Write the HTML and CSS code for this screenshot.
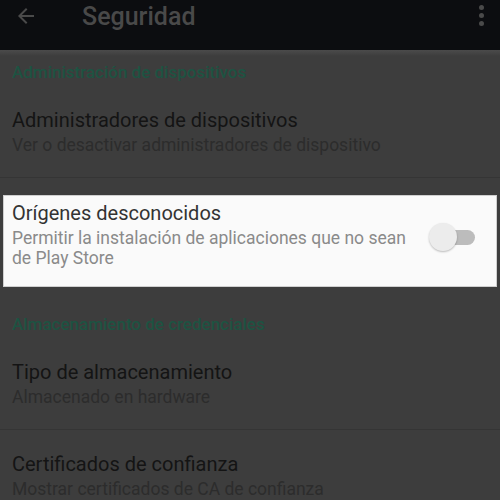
FILE: index.html
```html
<!DOCTYPE html>
<html lang="es">
<head>
  <meta charset="UTF-8" />
  <title>Seguridad</title>
  <link rel="stylesheet" href="styles.css">
</head>
<body>
  <header class="toolbar">
    <svg class="back" width="24" height="24" viewBox="0 0 24 24">
      <path d="M20 11H7.83l5.59-5.59L12 4l-8 8 8 8 1.41-1.41L7.83 13H20v-2z" fill="#4a4a4a"/>
    </svg>
    <h1>Seguridad</h1>
    <div class="more">
      <span></span><span></span><span></span>
    </div>
  </header>

  <main class="list">
    <div class="section">Administración de dispositivos</div>
    <div class="item">
      <div class="title">Administradores de dispositivos</div>
      <div class="summary">Ver o desactivar administradores de dispositivo</div>
    </div>

    <div class="item highlight">
      <div class="text">
        <div class="title">Orígenes desconocidos</div>
        <div class="summary">Permitir la instalación de aplicaciones que no sean de Play Store</div>
      </div>
      <div class="switch">
        <span class="track"></span>
        <span class="thumb"></span>
      </div>
    </div>

    <div class="section">Almacenamiento de credenciales</div>
    <div class="item">
      <div class="title">Tipo de almacenamiento</div>
      <div class="summary">Almacenado en hardware</div>
    </div>
    <div class="item">
      <div class="title">Certificados de confianza</div>
      <div class="summary">Mostrar certificados de CA de confianza</div>
    </div>
  </main>
</body>
</html>
```

FILE: styles.css
```css
body {
  margin: 0;
  font-family: Roboto, "Noto Sans", sans-serif;
  background-color: #3d3d3d;
  width: 500px;
  height: 500px;
  overflow: hidden;
}

.toolbar {
  height: 50px;
  background-color: #0c0d10;
  display: flex;
  align-items: flex-start;
}

.toolbar .back {
  margin: 4px 0 0 14px;
}

.toolbar h1 {
  margin: 0 0 0 44px;
  font-size: 25px;
  font-weight: 500;
  color: #494949;
  line-height: 34px;
}

.more {
  margin: 5px 16px 0 auto;
  display: flex;
  flex-direction: column;
  gap: 3px;
}

.more span {
  width: 5px;
  height: 5px;
  border-radius: 50%;
  background-color: #4a4a4a;
}

.list {
  background: linear-gradient(#4b4b4b, #3d3d3d 6px);
}

.section {
  box-sizing: border-box;
  height: 36px;
  padding: 12px 12px 0;
  font-size: 17px;
  font-weight: 500;
  line-height: 20px;
  color: #1d5342;
}

.item {
  box-sizing: border-box;
  height: 92px;
  padding: 21px 12px 0;
  border-bottom: 1px solid #353535;
}

.item .title {
  font-size: 20px;
  line-height: 26px;
  color: #141414;
}

.item .summary {
  margin-top: 2px;
  font-size: 17.5px;
  line-height: 20px;
  color: #2c2c2c;
}

.item.highlight {
  height: 90px;
  margin: 18px 4px 16px;
  padding: 4px 8px 0;
  background-color: #fafafa;
  border: none;
  box-shadow: 0 0 0 1px #cfcfcf;
  display: flex;
  align-items: flex-start;
}

.highlight .text {
  width: 400px;
}

.highlight .title {
  color: #333;
}

.highlight .summary {
  color: #8a8a8a;
}

.switch {
  position: relative;
  width: 48px;
  height: 30px;
  margin: 23px 0 0 17px;
}

.switch .track {
  position: absolute;
  left: 12px;
  top: 7px;
  width: 34px;
  height: 15px;
  border-radius: 8px;
  background-color: #bcbcbc;
}

.switch .thumb {
  position: absolute;
  left: 0;
  top: 0;
  width: 28px;
  height: 28px;
  border-radius: 50%;
  background-color: #ececec;
  box-shadow: 0 1px 2px rgba(0, 0, 0, 0.25);
}
```
